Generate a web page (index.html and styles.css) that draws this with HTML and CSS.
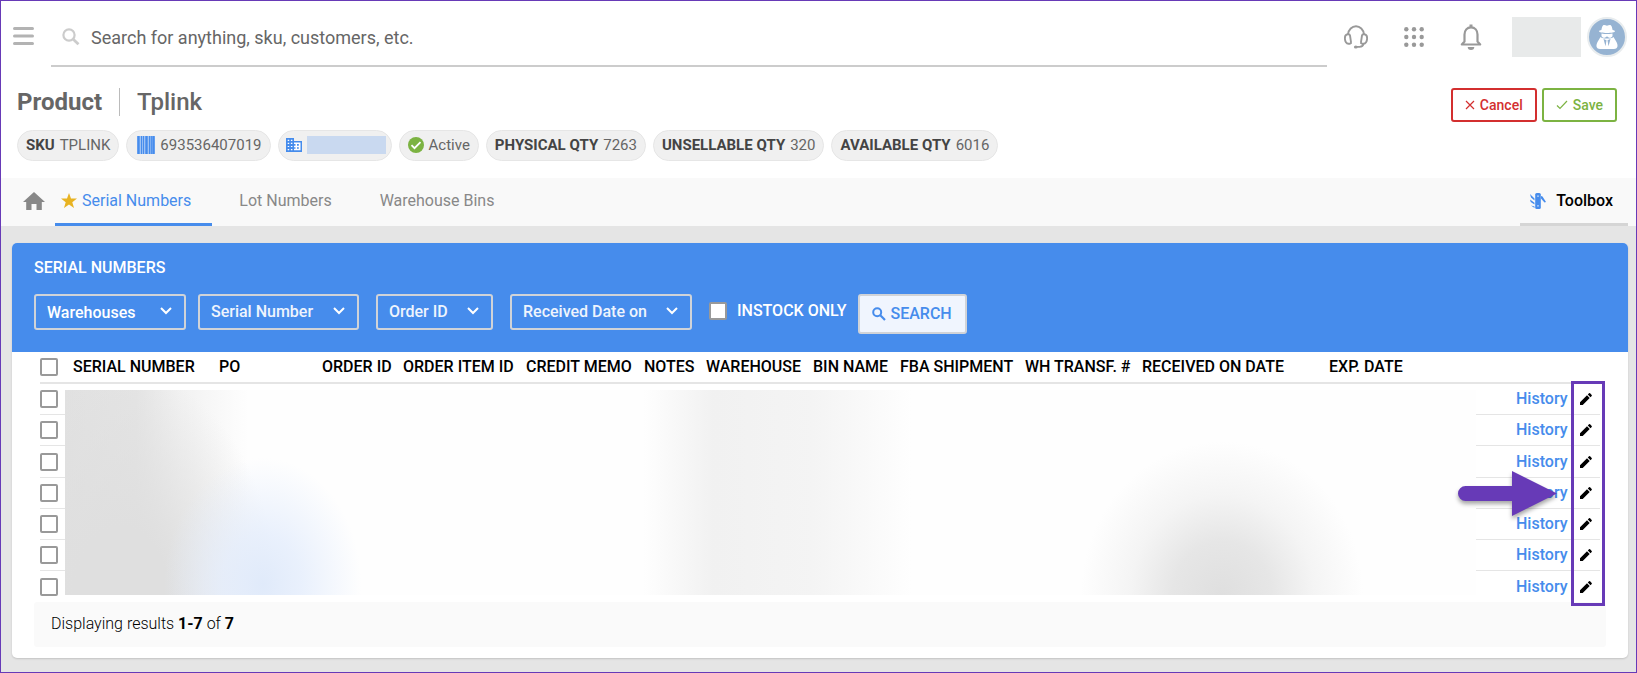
FILE: index.html
```html
<!doctype html>
<html lang="en">
<head>
  <meta charset="utf-8" />
  <meta name="viewport" content="width=device-width, initial-scale=1" />
  <title>Product Tplink – Serial Numbers</title>
  <link rel="stylesheet" href="styles.css">
</head>
<body>
  <svg class="defs" aria-hidden="true">
    <symbol id="i-chevron" viewBox="0 0 12 8"><path d="M1 1l5 5 5-5" fill="none" stroke="currentColor" stroke-width="2"/></symbol>
    <symbol id="i-pencil" viewBox="0 0 14 14"><path d="M1 10.300V13h2.700l7-7L8 3.300zM12.700 4a.9.9 0 0 0 0-1.100L11.100 1.300a.9.9 0 0 0-1.100 0L8.800 2.500l2.700 2.700z" fill="currentColor"/></symbol>
  </svg>

  <header class="topbar">
    <button class="icon-btn menu" aria-label="Menu">
      <svg width="21" height="18" viewBox="0 0 21 18"><path d="M1.500 1.500h18M1.500 9h18M1.500 16.500h18" stroke="#b3b3b3" stroke-width="3" stroke-linecap="round"/></svg>
    </button>
    <label class="search">
      <svg width="18" height="18" viewBox="0 0 18 18" fill="none" stroke="#ccc"><circle cx="7" cy="7" r="5.600" stroke-width="2.200"/><path d="M11.200 11.200l5.300 5" stroke-width="2.800"/></svg>
      <input type="search" aria-label="Search" placeholder="Search for anything, sku, customers, etc.">
    </label>
    <nav class="actions" aria-label="Account">
      <button class="icon-btn" aria-label="Support">
        <svg width="24" height="24" viewBox="0 0 24 24" fill="none" stroke="#999" stroke-width="1.900"><path d="M4 9.500C4.500 4.500 8 1.300 12 1.300s7.500 3.200 8 8.200"/><path d="M3.600 9.300c-2 .3-2.800 2-2.700 4.200.1 3 1.400 5.300 3.700 5.200h1.300c.9 0 1.300-.6 1.100-1.500l-1-6.800c-.2-1-1-1.300-2.400-1.100z"/><path d="M20.400 9.300c2 .3 2.800 2 2.700 4.200-.1 3-1.400 5.300-3.700 5.200h-1.300c-.9 0-1.300-.6-1.100-1.500l1-6.800c.2-1 1-1.300 2.400-1.100z"/><path d="M19.500 18.700c-.3 2.200-1.800 3.200-4 3.200h-3"/><ellipse cx="11.800" cy="22" rx="1.900" ry="1.500" fill="#999" stroke="none"/></svg>
      </button>
      <button class="icon-btn" aria-label="Apps">
        <svg width="20" height="20" viewBox="0 0 20 20" fill="#999"><circle cx="2.300" cy="2.300" r="2.200"/><circle cx="10" cy="2.300" r="2.200"/><circle cx="17.700" cy="2.300" r="2.200"/><circle cx="2.300" cy="10" r="2.200"/><circle cx="10" cy="10" r="2.200"/><circle cx="17.700" cy="10" r="2.200"/><circle cx="2.300" cy="17.700" r="2.200"/><circle cx="10" cy="17.700" r="2.200"/><circle cx="17.700" cy="17.700" r="2.200"/></svg>
      </button>
      <button class="icon-btn" aria-label="Notifications">
        <svg width="22" height="26" viewBox="0 0 22 26"><path d="M11 .5v2.500" stroke="#999" stroke-width="3"/><path d="M4.500 17.500V10.500C4.500 6.500 7 3.300 11 3.300s6.500 3.200 6.500 7.200v7l2.700 3H1.800z" fill="none" stroke="#999" stroke-width="2.200" stroke-linejoin="round"/><path d="M7.700 23h6.600a3.300 3 0 0 1-6.600 0z" fill="#999"/></svg>
      </button>
      <span class="account"></span>
      <button class="avatar" aria-label="Profile">
        <svg width="24" height="26" viewBox="0 0 24 26" fill="#fff"><path d="M8 1.500c1.300-1 2.500.2 4 .2s2.700-1.200 4-.2c.9.900 1.300 2.900 1.600 4.500 1.500.3 2.400.8 2.400 1.300 0 1-3.500 1.700-8 1.700S4 8.300 4 7.300C4 6.800 4.900 6.300 6.400 6 6.700 4.400 7.100 2.400 8 1.500z"/><path d="M6.500 9.500c3.500.8 7.500.8 11 0v2.500c-.5 1.500-2 2-3.300 1.700-.9-.3-1.200-1.200-2.200-1.200s-1.300.9-2.200 1.200C8.500 14 7 13.500 6.500 12z"/><path d="M5.500 13c2 2 11 2 13 0l3 5c2 4 1 7-2.500 7H5C1.500 25 .5 22 2.500 18z"/><path d="M8.500 15l3 1.200-1 6zM15.500 15l-3 1.200 1 6z" fill="#96b3d2"/></svg>
      </button>
    </nav>
  </header>

  <section class="product">
    <div class="heading">
      <h1>Product</h1>
      <h2>Tplink</h2>
      <div class="buttons">
        <button class="btn cancel"><svg width="10" height="10" viewBox="0 0 10 10"><path d="M1 1l8 8M9 1L1 9" stroke="currentColor" stroke-width="1.200"/></svg>Cancel</button>
        <button class="btn save"><svg width="12" height="10" viewBox="0 0 12 10"><path d="M1 5.500l3 3L11 1" fill="none" stroke="currentColor" stroke-width="1.200"/></svg>Save</button>
      </div>
    </div>
    <div class="pills">
      <span class="pill"><b>SKU</b> TPLINK</span>
      <span class="pill code"><svg width="18" height="18" viewBox="0 0 18 18" fill="none" stroke="#468cec"><rect width="18" height="18" rx="1" fill="#a9c9f6" stroke="none"/><path d="M1.500 0v18M9.500 0v18M16.500 0v18" stroke-width="2.400"/><path d="M4.500 0v18M6.500 0v18M12.500 0v18M14.300 0v18" stroke-width="1.200"/></svg>693536407019</span>
      <span class="pill vendor"><svg width="16" height="14" viewBox="0 0 16 14"><path d="M0 0h8v3h8v11H0z" fill="#468cec"/><path d="M1.700 1.700h1.500v1.200H1.700zM4.900 1.700h1.500v1.200H4.900zM1.700 4.800h1.500V6H1.700zM4.900 4.800h1.500V6H4.900zM1.700 7.900h1.500v1.200H1.700zM4.900 7.900h1.500v1.200H4.900zM1.700 11h1.500v1.200H1.700zM4.900 11h1.500v1.200H4.900zM8 4.600h6.500v7.700H8V10.800h1.500V9.200H8V7.700h1.500V6.100H8z" fill="#fff"/><path d="M11 6.100h1.800v1.600H11zM11 9.200h1.800v1.600H11z" fill="#468cec"/></svg><i class="masked"></i></span>
      <span class="pill"><svg width="16" height="16" viewBox="0 0 16 16"><circle cx="8" cy="8" r="8" fill="#7cb342"/><path d="M3.500 8.200l3 3 6-6" fill="none" stroke="#fff" stroke-width="1.800"/></svg>Active</span>
      <span class="pill"><b>PHYSICAL QTY</b> 7263</span>
      <span class="pill"><b>UNSELLABLE QTY</b> 320</span>
      <span class="pill"><b>AVAILABLE QTY</b> 6016</span>
    </div>
  </section>

  <nav class="tabs" aria-label="Product sections">
    <a class="home" href="#" aria-label="Home"><svg width="22" height="18" viewBox="0 0 22 18"><path d="M11 0l11 10h-3.200v8h-5.300v-6h-5v6H3.200v-8H0z" fill="#888"/></svg></a>
    <a class="tab active" href="#"><svg width="16" height="16" viewBox="0 0 16 16"><path d="M8 0l2 5.400 6 .2-4.700 3.600L13 15l-5-3.400L3 15l1.700-5.800L0 5.600l6-.2z" fill="#e8b322"/></svg>Serial Numbers</a>
    <a class="tab" href="#">Lot Numbers</a>
    <a class="tab" href="#">Warehouse Bins</a>
    <a class="toolbox" href="#"><svg width="16" height="16" viewBox="0 0 16 16"><path d="M5.200 1.500q0-1.500 1.500-1.500h2.600q1.500 0 1.500 1.500v13q0 1.500-1.500 1.500H6.700q-1.500 0-1.500-1.500z" fill="#468cec"/><path d="M11 3l1.500.5L16 9l-1.500.5L11 5.500zM0 1l4.500 4.500v2L1 4.500zM0 6.500l4.500 3.300v1.700L.7 9zM1 12.500l3.500 1V15z" fill="#468cec"/><path d="M7.400 2.500h1.200v1.200H7.400zM7.400 12.300h1.200v1.200H7.400z" fill="#fff"/></svg>Toolbox</a>
  </nav>

  <main>
    <section class="card">
      <div class="card-head">
        <h3>SERIAL NUMBERS</h3>
        <form class="filters">
          <div class="group">
            <span class="select wide"><select aria-label="Warehouses"><option>Warehouses</option></select><svg width="12" height="8"><use href="#i-chevron"/></svg></span>
            <span class="select"><select aria-label="Serial Number"><option>Serial Number</option></select><svg width="12" height="8"><use href="#i-chevron"/></svg></span>
          </div>
          <span class="select"><select aria-label="Order ID"><option>Order ID</option></select><svg width="12" height="8"><use href="#i-chevron"/></svg></span>
          <span class="select"><select aria-label="Received Date on"><option>Received Date on</option></select><svg width="12" height="8"><use href="#i-chevron"/></svg></span>
          <div class="group">
            <label class="instock"><input type="checkbox"> INSTOCK ONLY</label>
            <button class="search-btn" type="button"><svg width="14" height="14" viewBox="0 0 14 14" fill="none" stroke="#468cec"><circle cx="5.200" cy="5.200" r="4" stroke-width="2"/><path d="M8.300 8.300l4.700 4.700" stroke-width="2.200"/></svg>SEARCH</button>
          </div>
        </form>
      </div>

      <div class="table-wrap">
        <table>
          <colgroup>
            <col class="c-check"><col class="c-serial"><col class="c-po"><col class="c-order"><col class="c-item"><col class="c-memo"><col class="c-notes"><col class="c-wh"><col class="c-bin"><col class="c-fba"><col class="c-transf"><col class="c-recv"><col><col class="c-history"><col class="c-edit">
          </colgroup>
          <thead>
            <tr>
              <th><input type="checkbox" aria-label="Select all"></th>
              <th>SERIAL NUMBER</th><th>PO</th><th>ORDER ID</th><th>ORDER ITEM ID</th><th>CREDIT MEMO</th><th>NOTES</th><th>WAREHOUSE</th><th>BIN NAME</th><th>FBA SHIPMENT</th><th>WH TRANSF. #</th><th>RECEIVED ON DATE</th><th>EXP. DATE</th><th></th><th></th>
            </tr>
          </thead>
          <tbody>
            <tr><td><input type="checkbox" aria-label="Select row 1"></td><td colspan="12"></td><td><a href="#">History</a></td><td><button class="edit" aria-label="Edit row 1"><svg width="14" height="14"><use href="#i-pencil"/></svg></button></td></tr>
            <tr><td><input type="checkbox" aria-label="Select row 2"></td><td colspan="12"></td><td><a href="#">History</a></td><td><button class="edit" aria-label="Edit row 2"><svg width="14" height="14"><use href="#i-pencil"/></svg></button></td></tr>
            <tr><td><input type="checkbox" aria-label="Select row 3"></td><td colspan="12"></td><td><a href="#">History</a></td><td><button class="edit" aria-label="Edit row 3"><svg width="14" height="14"><use href="#i-pencil"/></svg></button></td></tr>
            <tr><td><input type="checkbox" aria-label="Select row 4"></td><td colspan="12"></td><td><a href="#">History</a></td><td><button class="edit" aria-label="Edit row 4"><svg width="14" height="14"><use href="#i-pencil"/></svg></button></td></tr>
            <tr><td><input type="checkbox" aria-label="Select row 5"></td><td colspan="12"></td><td><a href="#">History</a></td><td><button class="edit" aria-label="Edit row 5"><svg width="14" height="14"><use href="#i-pencil"/></svg></button></td></tr>
            <tr><td><input type="checkbox" aria-label="Select row 6"></td><td colspan="12"></td><td><a href="#">History</a></td><td><button class="edit" aria-label="Edit row 6"><svg width="14" height="14"><use href="#i-pencil"/></svg></button></td></tr>
            <tr><td><input type="checkbox" aria-label="Select row 7"></td><td colspan="12"></td><td><a href="#">History</a></td><td><button class="edit" aria-label="Edit row 7"><svg width="14" height="14"><use href="#i-pencil"/></svg></button></td></tr>
          </tbody>
        </table>
        <div class="redacted"></div>
        <div class="edit-frame"></div>
        <svg class="arrow" width="99" height="46" viewBox="0 0 99 46" aria-hidden="true"><path d="M7.500 15H54V0l45 22.500L54 45V30H7.500a7.500 7.500 0 0 1 0-15z" fill="#673ab7"/></svg>
      </div>

      <div class="results">Displaying results <b>1-7</b> of <b>7</b></div>
    </section>
  </main>
</body>
</html>
```
FILE: styles.css
```css
:root{
  --blue:#468cec;
  --purple:#673ab7;
  --line:#e5e5e5;
  --muted:#666;
}

*{box-sizing:border-box}
body{
  margin:0; min-height:100vh; border:1px solid var(--purple);
  background:#e5e5e5; color:#000;
  font:16px/20px Roboto, "Liberation Sans", sans-serif;
}
h1,h2,h3{margin:0}
a{text-decoration:none}
svg{display:block; flex:none}
button,input,select{font:inherit; margin:0}
.defs{position:absolute; width:0; height:0}

/* top bar */
.topbar{display:flex; align-items:flex-start; background:#fff; padding:0 9px 0 12px; height:66px}
.icon-btn{border:0; padding:0; background:none; display:flex}
.menu{margin:26px 17px 0 0}
.search{flex:1; height:66px; display:flex; align-items:center; gap:11px; padding:8px 11px 0; border-bottom:2px solid #ccc}
.search input{flex:1; border:0; outline:0; padding:0; background:none; font-size:18px; line-height:24px; height:30px}
.search input::placeholder{color:var(--muted); opacity:1}
.actions{display:flex; align-items:center; height:72px; padding-left:17px; gap:36px}
.account{width:69px; height:40px; background:#e8eaea; margin-left:-6px}
.avatar{
  width:40px; height:40px; margin-left:-30px; padding:0; display:grid; place-items:center;
  border:2px solid #e8ecee; border-radius:50%; background:#96b3d2;
}

/* product heading */
.product{background:#fff; padding:21px 19px 17px 16px; height:111px}
.heading{display:flex; align-items:center; height:28px; color:var(--muted)}
h1,h2{font-size:24px; line-height:28px}
h1{font-weight:700; padding-right:17px; border-right:1px solid #bbb}
h2{font-weight:500; padding-left:17px}
.buttons{display:flex; gap:5px; margin-left:auto; align-self:flex-start}
.btn{
  height:34px; display:flex; align-items:center; gap:5px; padding:0 12px;
  border:2px solid; border-radius:3px; background:#fff; font-size:14px; font-weight:500;
}
.cancel{color:#d32f2f}
.save{color:#7cb342}
.pills{display:flex; gap:7px; margin-top:14px}
.pill{
  display:flex; align-items:center; gap:5px; height:31px; padding:0 8px 2px;
  border:1px solid #e6e6e6; border-radius:16px; background:#f0f0f0;
  color:var(--muted); font-size:15px;
}
.pill b{color:#444}
.code{padding-left:10px}
.vendor{padding:0 5px 2px 7px}
.masked{width:79px; height:18px; background:#c9d9f0}

/* tabs */
.tabs{display:flex; height:48px; background:#f9f9f9; padding:0 8px 0 22px}
.tabs a{display:flex; align-items:center; gap:5px; border-bottom:3px solid transparent}
.home{margin-right:10px}
.tab{padding:0 21px 0 27px; color:#888}
.tabs .active{padding-left:6px; color:var(--blue); border-color:var(--blue)}
.tabs .toolbox{margin-left:auto; gap:10px; padding:0 15px 0 10px; color:#000; font-weight:500; border-color:#d5d5d5}

/* card */
main{padding:17px 8px 14px 11px}
.card{background:#fff; border-radius:5px; padding-bottom:11px; box-shadow:0 1px 2px rgba(0,0,0,.15)}
.card-head{height:109px; background:var(--blue); color:#fff; padding:15px 22px; border-radius:5px 5px 0 0}
h3{font-size:16px; line-height:20px; font-weight:500}
.filters{display:flex; align-items:flex-start; gap:17px; margin-top:16px}
.group{display:flex; align-items:flex-start; gap:12px}
.select{position:relative}
.select select{
  appearance:none; height:36px; padding:0 43px 0 11px; border:2px solid #d0d3d8; border-radius:3px;
  background:transparent; color:#eef4fd; font-weight:500;
}
.select svg{position:absolute; right:14px; top:13px; pointer-events:none; color:#fff}
.wide select{width:152px; padding-top:2px; color:#fff}

input[type=checkbox]{appearance:none; width:18px; height:18px; border:2px solid #999; border-radius:2px; background:#fff; display:block}
.instock{display:flex; align-items:center; gap:10px; height:34px; font-weight:500}
.search-btn{
  height:40px; display:flex; align-items:center; gap:4px; padding:0 13px 0 12px;
  border:2px solid #d0d3d8; border-radius:3px; background:#f0f5fe; color:var(--blue); font-weight:500;
}

/* table */
.table-wrap{position:relative; margin:0 28px}
table{width:100%; table-layout:fixed; border-collapse:separate; border-spacing:0}
th,td{padding:0; text-align:left; white-space:nowrap}
th{height:32px; padding-left:6px; border-bottom:2px solid var(--line); font-weight:500; line-height:20px}
td{height:31px; border-bottom:1px solid var(--line)}
tr:nth-child(3) td{height:32px}
tr:last-child td{border-bottom:0}
th:first-child{padding:0}
td a{display:block; padding-left:40px; color:var(--blue); font-weight:500}
.edit{display:block; border:0; background:none; padding:0; margin-left:8px; color:#000}
.c-check{width:27px}
.c-serial{width:146px}
.c-po{width:103px}
.c-order{width:81px}
.c-item{width:123px}
.c-memo{width:118px}
.c-notes{width:62px}
.c-wh{width:107px}
.c-bin{width:87px}
.c-fba{width:125px}
.c-transf{width:117px}
.c-recv{width:187px}
.c-history{width:95px}
.c-edit{width:29px}

.redacted{
  position:absolute; top:38px; bottom:7px; left:25px; right:124px;
  background:
    radial-gradient(10% 75% at 82% 100%, #dfdfdf, #e6e6e6 35%, rgba(240,240,240,.7) 65%, transparent),
    radial-gradient(7% 62% at 14% 95%, #e0eafa, rgba(228,237,252,.8) 40%, transparent),
    radial-gradient(11% 110% at 4% 100%, #dfdfdf 30%, transparent),
    linear-gradient(90deg, #e1e1e1, #e4e4e4 5%, rgba(238,238,238,.8) 8%, transparent 13%),
    linear-gradient(90deg, transparent 41%, #f1f1f1 46%, #f4f4f4 53%, transparent 60%),
    #fefefe;
}
.edit-frame{position:absolute; top:29px; bottom:-4px; right:-5px; width:34px; border:3px solid var(--purple); pointer-events:none}
.arrow{position:absolute; top:119px; right:43px; filter:drop-shadow(0 3px 2px rgba(0,0,0,.35))}

.results{margin:0 22px; height:45px; padding:12px 17px; border-radius:3px; background:#fafafa; font-weight:300}
.results b{font-weight:700}
```
